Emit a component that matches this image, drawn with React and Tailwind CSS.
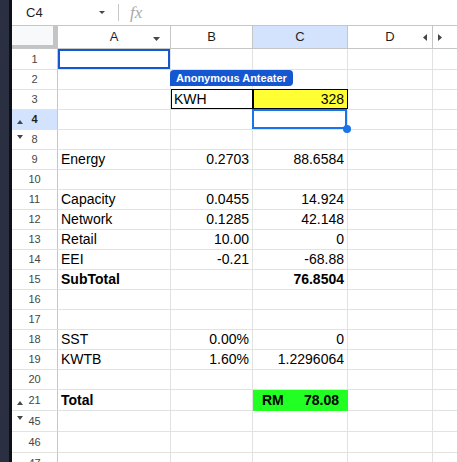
import React from "react";

const rows = [
  { n: "1", h: "h-[21px]", lh: "leading-[20px]", collab: true },
  { n: "2" },
  { n: "3", kwh: true },
  { n: "4", sel: true, tri: "up", triTop: "top-[10px]" },
  { n: "8", tri: "down", triTop: "top-[5px]" },
  { n: "9", a: "Energy", b: "0.2703", c: "88.6584" },
  { n: "10" },
  { n: "11", a: "Capacity", b: "0.0455", c: "14.924" },
  { n: "12", a: "Network", b: "0.1285", c: "42.148" },
  { n: "13", a: "Retail", b: "10.00", c: "0" },
  { n: "14", a: "EEI", b: "-0.21", c: "-68.88" },
  { n: "15", a: "SubTotal", c: "76.8504", bold: true },
  { n: "16" },
  { n: "17" },
  { n: "18", a: "SST", b: "0.00%", c: "0" },
  { n: "19", a: "KWTB", b: "1.60%", c: "1.2296064" },
  { n: "20" },
  { n: "21", a: "Total", bold: true, total: true, tri: "up", triTop: "top-[11px]", h: "h-[21px]", lh: "leading-[20px]" },
  { n: "45", tri: "down", triTop: "top-[5px]", h: "h-[21px]", lh: "leading-[20px]" },
  { n: "46", h: "h-[21px]", lh: "leading-[20px]" },
  { n: "47", h: "h-[21px]", lh: "leading-[20px]" },
];

function TriUp() {
  return (
    <svg width="6" height="4" viewBox="0 0 6 4" className="block">
      <path d="M0 4 L3 0 L6 4 Z" fill="#444746" />
    </svg>
  );
}
function TriDown({ w = 6, h = 4 }) {
  return (
    <svg width={w} height={h} viewBox={`0 0 ${w} ${h}`} className="block">
      <path d={`M0 0 L${w} 0 L${w / 2} ${h} Z`} fill="#444746" />
    </svg>
  );
}

const grid = "border-b border-r border-b-[#e1e3e1] border-r-[#e1e3e1]";

export default function App() {
  return (
    <div
      className="flex h-[462px] w-[457px] overflow-hidden bg-white text-black"
      style={{ fontFamily: '"Liberation Sans", Arial, sans-serif' }}
    >
      <div className="w-[9px] shrink-0 bg-[#2b2f42]" />
      <div className="w-[3px] shrink-0 bg-[#0e1016]" />
      <div className="flex min-w-0 flex-1 flex-col">
        {/* formula bar */}
        <div className="flex h-[25px] shrink-0 items-center">
          <div className="w-[87px] pl-[14px] text-[13px] leading-[16px] text-[#1f1f1f]">C4</div>
          <TriDown w={6} h={3} />
          <div className="ml-[13px] h-[17px] w-px bg-[#c4c7c5]" />
          <span
            className="ml-[11px] text-[17px] italic leading-[20px] text-[#a8a8a8]"
            style={{ fontFamily: '"Liberation Serif", "Times New Roman", serif' }}
          >
            fx
          </span>
        </div>

        {/* column headers */}
        <div className="flex h-[24px] shrink-0 border-y border-[#c4c7c5] text-[13px] text-[#1f1f1f]">
          <div className="h-full w-[46px] shrink-0 border-b-[3px] border-r-[5px] border-[#c4c4c4] bg-[#f8f9fa]" />
          <div className="relative flex h-full w-[113px] shrink-0 items-center justify-center border-r border-[#c4c7c5]">
            A
            <div className="absolute left-[95px] top-[11px]">
              <TriDown w={7} h={4} />
            </div>
          </div>
          <div className="flex h-full w-[82px] shrink-0 items-center justify-center border-r border-[#c4c7c5]">B</div>
          <div className="flex h-full w-[95px] shrink-0 items-center justify-center border-r border-[#c4c7c5] bg-[#d3e3fd]">C</div>
          <div className="relative flex h-full w-[85px] shrink-0 items-center justify-center border-r border-[#c4c7c5]">
            D
            <svg width="4" height="7" viewBox="0 0 4 7" className="absolute left-[75px] top-[8px]">
              <path d="M4 0 L0 3.5 L4 7 Z" fill="#444746" />
            </svg>
          </div>
          <div className="relative h-full flex-1">
            <svg width="4" height="7" viewBox="0 0 4 7" className="absolute left-[5px] top-[8px]">
              <path d="M0 0 L4 3.5 L0 7 Z" fill="#444746" />
            </svg>
          </div>
        </div>

        {/* body rows */}
        {rows.map((r) => {
          const h = r.h || "h-[20px]";
          const lh = r.lh || "leading-[19px]";
          const txt = `text-[14px] ${lh} whitespace-nowrap ${r.bold ? "font-bold" : ""}`;
          return (
            <div key={r.n} className={`flex ${h} shrink-0`}>
              {/* row header */}
              <div
                className={`relative flex h-full w-[46px] shrink-0 items-center justify-center border-b border-r border-b-[#e1e3e1] border-r-[#c4c7c5] text-[11px] ${
                  r.sel ? "bg-[#d3e3fd] font-bold text-[#1f1f1f]" : "text-[#444746]"
                }`}
              >
                {r.n}
                {r.tri && (
                  <div className={`absolute left-[5px] ${r.triTop}`}>
                    {r.tri === "up" ? <TriUp /> : <TriDown />}
                  </div>
                )}
              </div>
              {/* A */}
              <div className={`relative h-full w-[113px] shrink-0 pl-[3px] ${grid} ${txt}`}>
                {r.a}
                {r.collab && (
                  <>
                    <div className="pointer-events-none absolute inset-0 border-2 border-[#1557d0]" />
                    <div className="absolute left-[112px] top-[21px] z-20 flex h-[16px] w-[123px] items-center whitespace-nowrap rounded-[4px] rounded-bl-none bg-[#1557d0] pl-[6px] text-[11px] font-bold leading-[16px] text-white">
                      Anonymous Anteater
                    </div>
                  </>
                )}
              </div>
              {/* B */}
              <div className={`relative h-full w-[82px] shrink-0 pr-[3px] text-right ${grid} ${txt}`}>
                {r.kwh ? (
                  <>
                    <span className="block pl-[3px] text-left">KWH</span>
                    <div className="pointer-events-none absolute -right-px -top-px bottom-0 left-0 border border-black" />
                  </>
                ) : (
                  r.b
                )}
              </div>
              {/* C */}
              {r.total ? (
                <div className={`flex h-full w-[95px] shrink-0 justify-between border-b border-r border-[#22ff22] bg-[#22ff22] pl-[9px] pr-[8px] font-bold ${txt}`}>
                  <span>RM</span>
                  <span>78.08</span>
                </div>
              ) : (
                <div
                  className={`relative h-full w-[95px] shrink-0 pr-[3px] text-right ${grid} ${txt} ${
                    r.kwh ? "bg-[#ffff33]" : ""
                  }`}
                >
                  {r.kwh ? "328" : r.c}
                  {r.kwh && (
                    <div className="pointer-events-none absolute -right-px -top-px bottom-0 left-0 border border-black" />
                  )}
                  {r.sel && (
                    <>
                      <div className="pointer-events-none absolute -left-px -top-px bottom-0 right-0 z-10 border-2 border-[#1a73e8]" />
                      <div className="absolute -bottom-[4px] -right-[4px] z-10 h-[8px] w-[8px] rounded-full bg-[#1a73e8]" />
                    </>
                  )}
                </div>
              )}
              {/* D */}
              <div className={`h-full w-[85px] shrink-0 ${grid}`} />
              {/* E */}
              <div className="h-full flex-1 border-b border-[#e1e3e1]" />
            </div>
          );
        })}
      </div>
    </div>
  );
}
